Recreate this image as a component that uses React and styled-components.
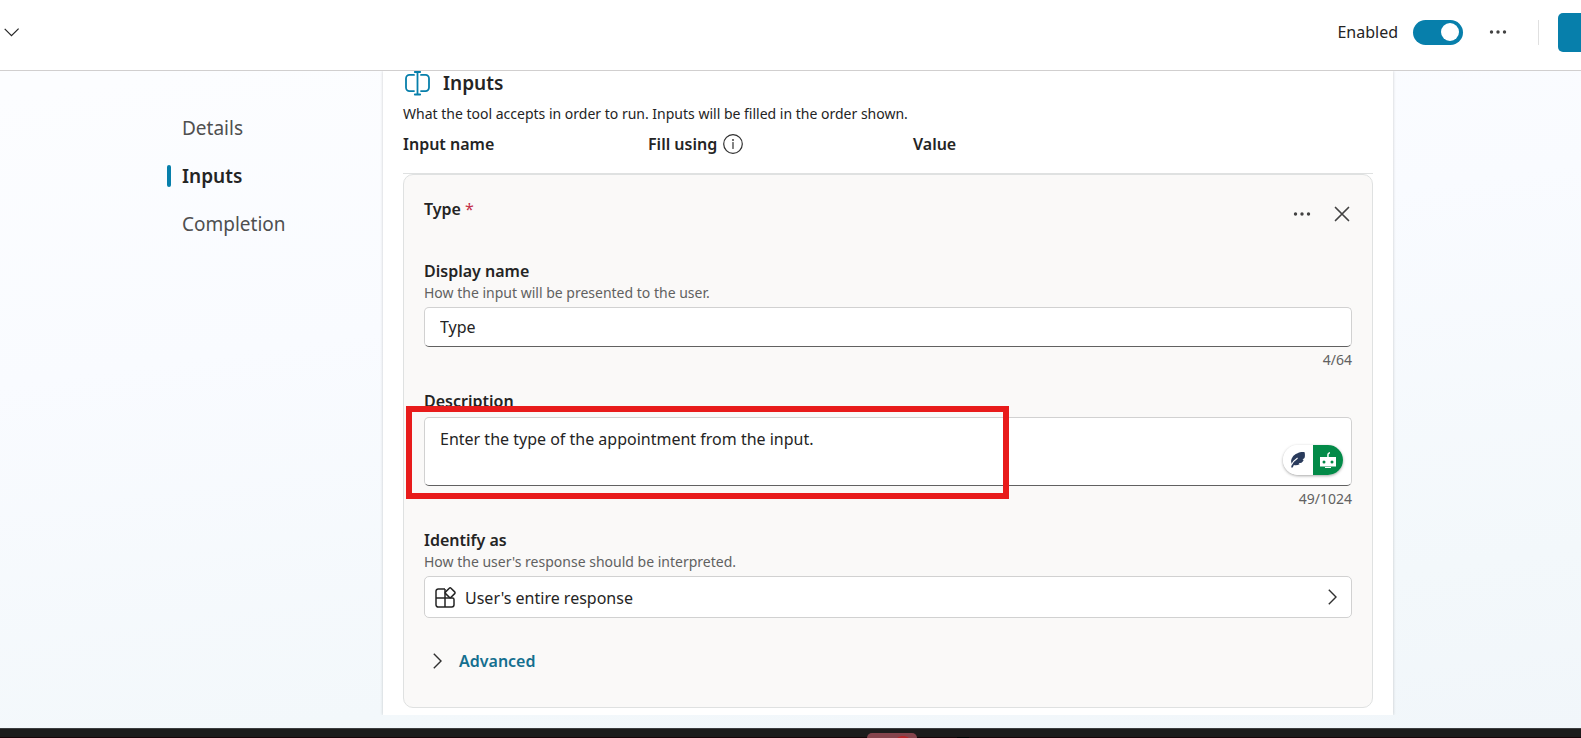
import React from "react";
import styled, { createGlobalStyle } from "styled-components";

const GlobalStyle = createGlobalStyle`
  * { box-sizing: border-box; }
  body {
    margin: 0;
    color: #242424;
    font-family: "Noto Sans", "Open Sans", sans-serif;
    font-size: 16px;
    line-height: 24px;
  }
  button, input, textarea { font: inherit; color: inherit; }
  h2, h3, p { margin: 0; }
`;

const Page = styled.div`
  display: flex;
  flex-direction: column;
  min-height: 100vh;
  overflow: hidden;
  background: linear-gradient(172deg, #fcfdff 10%, #f9fbff 40%, #f3f8fb 80%, #f1f6fa 100%);
`;

const Header = styled.header`
  display: flex;
  align-items: center;
  justify-content: space-between;
  height: 71px;
  padding: 0 0 6px 4px;
  border-bottom: 1px solid #d1cfcf;
  background: #fff;
`;

const HeaderActions = styled.div`
  display: flex;
  align-items: center;
`;

const IconButton = styled.button`
  display: grid;
  place-items: center;
  width: ${(p) => p.$width || 20}px;
  height: 24px;
  padding: 0;
  border: 0;
  background: none;
  color: #424242;
`;

const ToggleLabel = styled.label`
  display: flex;
  align-items: center;
  gap: 15px;
`;

const Toggle = styled.input`
  appearance: none;
  display: flex;
  align-items: center;
  justify-content: flex-end;
  width: 50px;
  height: 25px;
  margin: 0;
  padding: 0 4px;
  border-radius: 13px;
  background: #077fab;

  &::before {
    content: "";
    width: 18px;
    height: 18px;
    border-radius: 50%;
    background: #fff;
  }
`;

const Divider = styled.span`
  width: 1px;
  height: 25px;
  margin: 0 19px 0 5px;
  background: #e0e0e0;
`;

const SaveButton = styled.button`
  width: 23px;
  height: 39px;
  border: 0;
  border-radius: 5px 0 0 5px;
  background: #077fab;
`;

const Body = styled.div`
  display: flex;
  flex: 1;
  align-items: flex-start;
  padding: 0 188px 13px 0;
`;

const Nav = styled.nav`
  display: flex;
  flex-direction: column;
  gap: 24px;
  width: 383px;
  flex-shrink: 0;
  padding: 45px 0 0 167px;
`;

const NavLink = styled.a`
  display: flex;
  align-items: center;
  gap: 11px;
  color: ${(p) => (p.$active ? "#242424" : "#4f4f4f")};
  font-size: 19px;
  font-weight: ${(p) => (p.$active ? 600 : 400)};
  line-height: 24px;
  text-decoration: none;

  &::before {
    content: "";
    width: 4px;
    height: 22px;
    border-radius: 2px;
    background: ${(p) => (p.$active ? "#077fab" : "transparent")};
  }
`;

const Panel = styled.main`
  flex: 1;
  min-width: 0;
  padding: 0 20px 7px;
  background: #fff;
  box-shadow: 0 0 3px rgba(0, 0, 0, 0.2);
  clip-path: inset(0 -4px);
`;

const PanelTitle = styled.div`
  display: flex;
  align-items: center;
  gap: 12px;
  height: 24px;
  padding-left: 1px;
`;

const Title = styled.h2`
  font-size: 19px;
  font-weight: 600;
  line-height: 24px;
`;

const Intro = styled.p`
  margin-top: 9px;
  font-size: 14px;
  line-height: 20px;
`;

const Columns = styled.div`
  display: grid;
  grid-template-columns: 245px 265px 1fr;
  align-items: center;
  height: 50px;
  padding: 0 0 10px;
  border-bottom: 1px solid #dfe1e1;
`;

const ColumnName = styled.span`
  display: flex;
  align-items: center;
  gap: 6px;
  font-weight: 600;
`;

const Card = styled.section`
  padding: 20px 20px 34px;
  border: 1px solid #dfe1e1;
  border-radius: 10px;
  background: #faf9f8;
`;

const CardHeader = styled.div`
  display: flex;
  align-items: flex-start;
  justify-content: space-between;
  height: 64px;
`;

const CardTitle = styled.h3`
  margin-top: 2px;
  font-size: 16px;
  font-weight: 600;
`;

const Required = styled.span`
  color: #c4314b;
  font-weight: 400;
`;

const CardActions = styled.div`
  display: flex;
  gap: 20px;
  margin-top: 7px;
`;

const Field = styled.div`
  display: flex;
  flex-direction: column;
  margin-bottom: ${(p) => p.$gap}px;
`;

const FieldLabel = styled.label`
  font-weight: 600;
  line-height: 24px;
`;

const Hint = styled.p`
  margin-bottom: 4px;
  color: #616161;
  font-size: 14px;
  line-height: 20px;
`;

const TextInput = styled.input`
  width: 100%;
  height: 40px;
  padding: 0 15px;
  border: 1px solid #d1d1d1;
  border-bottom-color: #616161;
  border-radius: 5px;
  background: #fff;
`;

const TextArea = styled.textarea`
  display: block;
  width: 100%;
  height: 69px;
  padding: 9px 15px;
  border: 1px solid #d1d1d1;
  border-bottom-color: #616161;
  border-radius: 5px;
  background: #fff;
  resize: none;
`;

const AreaWrap = styled.div`
  position: relative;
  margin-top: 4px;
`;

const Highlight = styled.div`
  position: absolute;
  top: -11px;
  left: -18px;
  width: 65%;
  height: 93px;
  border: 6px solid #e81b1b;
  pointer-events: none;
`;

const Assistant = styled.div`
  position: absolute;
  right: 9px;
  bottom: 11px;
  display: flex;
  overflow: hidden;
  border-radius: 15px;
  box-shadow: 0 1px 3px rgba(0, 0, 0, 0.35);
`;

const AssistantButton = styled.button`
  display: grid;
  place-items: center;
  width: 30px;
  height: 30px;
  padding: 0;
  border: 0;
  background: ${(p) => (p.$green ? "#038a48" : "#fff")};
`;

const Counter = styled.span`
  align-self: flex-end;
  margin-top: 3px;
  color: #616161;
  font-size: 14px;
  line-height: 20px;
`;

const Picker = styled.button`
  display: flex;
  align-items: center;
  gap: 9px;
  width: 100%;
  height: 42px;
  padding: 0 14px 0 10px;
  border: 1px solid #d1d1d1;
  border-radius: 5px;
  background: #fff;
  text-align: left;
`;

const PickerText = styled.span`
  flex: 1;
  padding-top: 2px;
`;

const AdvancedButton = styled.button`
  display: flex;
  align-items: center;
  gap: 17px;
  padding: 0 9px;
  border: 0;
  background: none;
  color: #146f8f;
  font-weight: 600;
`;

const Taskbar = styled.footer`
  display: flex;
  height: 10px;
  padding-left: 867px;
  gap: 40px;
  align-items: flex-end;
  border-top: 1px solid #3c3e40;
  background: linear-gradient(#1c1c1c 8px, #160508 8px);
`;

const TaskbarApp = styled.span`
  width: 50px;
  height: 5px;
  border-radius: 5px 5px 0 0;
  background: radial-gradient(ellipse 6px 2px at 36px 5px, #b3262a 80%, transparent), #85444c;
`;

const TaskbarDot = styled.span`
  width: 12px;
  height: 1px;
  background: #000;
`;

const Ellipsis = () => (
  <svg width="18" height="6" viewBox="0 0 18 6" fill="currentColor" aria-hidden="true">
    <circle cx="2.5" cy="3" r="1.7" />
    <circle cx="9" cy="3" r="1.7" />
    <circle cx="15.5" cy="3" r="1.7" />
  </svg>
);

const ChevronDown = () => (
  <svg width="16" height="9" viewBox="0 0 16 9" fill="none" stroke="#242424" strokeWidth="1.2" aria-hidden="true">
    <path d="M.7.8 7.5 7.6 14.6.6" />
  </svg>
);

const ChevronRight = () => (
  <svg width="9" height="16" viewBox="0 0 9 16" fill="none" stroke="#303030" strokeWidth="1.4" aria-hidden="true">
    <path d="M.8.8 8 8 .8 15.2" />
  </svg>
);

const CloseIcon = () => (
  <svg width="16" height="16" viewBox="0 0 16 16" stroke="#424242" strokeWidth="1.7" strokeLinecap="round" aria-hidden="true">
    <path d="M1.5 1.5l13 13M14.5 1.5l-13 13" />
  </svg>
);

const InputsIcon = () => (
  <svg width="27" height="25" viewBox="0 0 27 25" fill="none" stroke="#077fab" strokeWidth="1.8" strokeLinecap="round" aria-hidden="true">
    <path d="M10 3.9H5.500a3.500 3.500 0 0 0-3.500 3.500v9.200a3.500 3.500 0 0 0 3.500 3.500H10M17 3.900h4.500a3.500 3.500 0 0 1 3.500 3.500v9.200a3.500 3.500 0 0 1-3.500 3.500H17M13.500 1v22.500M10.800 1h5.400M10.800 23.500h5.400" />
  </svg>
);

const InfoIcon = () => (
  <svg width="20" height="20" viewBox="0 0 20 20" fill="none" stroke="#303030" strokeWidth="1.2" aria-hidden="true">
    <circle cx="10" cy="10" r="9.300" />
    <path d="M10 8.500v6" strokeLinecap="round" />
    <circle cx="10" cy="6" r=".9" fill="#303030" stroke="none" />
  </svg>
);

const EntityIcon = () => (
  <svg width="21" height="21" viewBox="0 0 21 21" fill="none" stroke="#242424" strokeWidth="1.5" strokeLinejoin="round" aria-hidden="true">
    <path d="M10 2H3.200A2.200 2.200 0 0 0 1 4.200v13.600A2.200 2.200 0 0 0 3.200 20h13.600a2.200 2.200 0 0 0 2.200-2.200V12.500a1.500 1.500 0 0 0-1.500-1.500H1M10 2v18" />
    <path d="M14.300 1.200a1.200 1.200 0 0 1 1.700 0l3.700 3.700a1.200 1.200 0 0 1 0 1.700L16 10.300a1.200 1.200 0 0 1-1.700 0l-3.700-3.700a1.200 1.200 0 0 1 0-1.700z" />
  </svg>
);

const FeatherIcon = () => (
  <svg width="16" height="18" viewBox="0 0 16 18" aria-hidden="true">
    <path d="M14.600 1.200C10 .6 5 2.800 2.600 6 .9 8.300.7 10.600 1.700 12.600l-.5 4h1.500l1.200-2.500c2 .5 4 .2 5.700-.9l-.9-1 2.800-.5c1-.8 1.700-1.700 2.200-2.800l-1.200-.5 2-1.300c.6-2 .6-4 .1-5.900z" fill="#2a3b5c" />
    <path d="M1.200 14.200C2.800 11 4.800 8.800 7.600 7" fill="none" stroke="#fff" strokeWidth="1.100" />
  </svg>
);

const BotIcon = () => (
  <svg width="18" height="18" viewBox="0 0 18 18" aria-hidden="true">
    <path d="M1 6h7.200V4.200C8.200 2.500 9.200 1.300 11 1v1.600c-1 .2-1.300.8-1.300 1.700V6H17v9.500H1zM6 16h6v1H6z" fill="#fff" />
    <circle cx="5" cy="11" r="1.500" fill="#038a48" />
    <circle cx="13" cy="11" r="1.500" fill="#038a48" />
  </svg>
);

const SECTIONS = ["Details", "Inputs", "Completion"];

export default function App() {
  return (
    <>
      <GlobalStyle />
      <Page>
        <Header>
          <IconButton $width={16} aria-label="Expand">
            <ChevronDown />
          </IconButton>
          <HeaderActions>
            <ToggleLabel>
              Enabled
              <Toggle type="checkbox" role="switch" defaultChecked />
            </ToggleLabel>
            <IconButton $width={70} aria-label="More options">
              <Ellipsis />
            </IconButton>
            <Divider />
            <SaveButton aria-label="Save" />
          </HeaderActions>
        </Header>

        <Body>
          <Nav>
            {SECTIONS.map((name) => (
              <NavLink key={name} href={`#${name.toLowerCase()}`} $active={name === "Inputs"}>
                {name}
              </NavLink>
            ))}
          </Nav>

          <Panel id="inputs">
            <PanelTitle>
              <InputsIcon />
              <Title>Inputs</Title>
            </PanelTitle>
            <Intro>What the tool accepts in order to run. Inputs will be filled in the order shown.</Intro>
            <Columns>
              <ColumnName>Input name</ColumnName>
              <ColumnName>
                Fill using <InfoIcon />
              </ColumnName>
              <ColumnName>Value</ColumnName>
            </Columns>

            <Card>
              <CardHeader>
                <CardTitle>
                  Type <Required>*</Required>
                </CardTitle>
                <CardActions>
                  <IconButton aria-label="More actions">
                    <Ellipsis />
                  </IconButton>
                  <IconButton aria-label="Remove input">
                    <CloseIcon />
                  </IconButton>
                </CardActions>
              </CardHeader>

              <Field $gap={19}>
                <FieldLabel htmlFor="display-name">Display name</FieldLabel>
                <Hint>How the input will be presented to the user.</Hint>
                <TextInput id="display-name" defaultValue="Type" />
                <Counter>4/64</Counter>
              </Field>

              <Field $gap={19}>
                <FieldLabel htmlFor="description">Description</FieldLabel>
                <AreaWrap>
                  <TextArea id="description" defaultValue="Enter the type of the appointment from the input." />
                  <Assistant>
                    <AssistantButton aria-label="Rewrite">
                      <FeatherIcon />
                    </AssistantButton>
                    <AssistantButton $green aria-label="Assistant">
                      <BotIcon />
                    </AssistantButton>
                  </Assistant>
                  <Highlight />
                </AreaWrap>
                <Counter>49/1024</Counter>
              </Field>

              <Field $gap={31}>
                <FieldLabel htmlFor="identify-as">Identify as</FieldLabel>
                <Hint>How the user's response should be interpreted.</Hint>
                <Picker id="identify-as">
                  <EntityIcon />
                  <PickerText>User's entire response</PickerText>
                  <ChevronRight />
                </Picker>
              </Field>

              <AdvancedButton aria-expanded="false">
                <ChevronRight />
                Advanced
              </AdvancedButton>
            </Card>
          </Panel>
        </Body>

        <Taskbar>
          <TaskbarApp />
          <TaskbarDot />
        </Taskbar>
      </Page>
    </>
  );
}
